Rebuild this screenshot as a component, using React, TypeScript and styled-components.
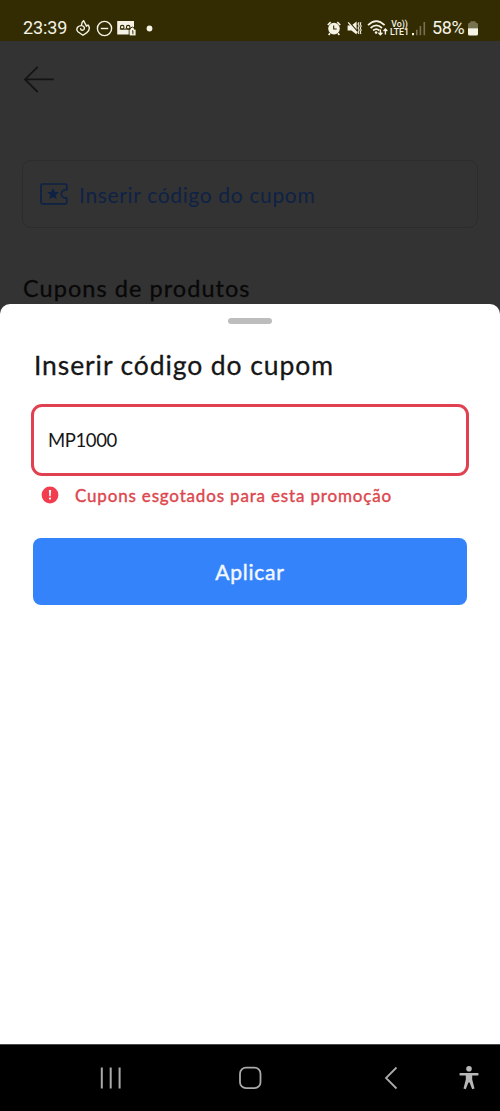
import React from "react";
import styled, { createGlobalStyle } from "styled-components";

const GlobalStyle = createGlobalStyle`
  * { box-sizing: border-box; }
  body { margin: 0; background: #333; }
`;

const Screen = styled.main`
  width: 500px;
  height: 1111px;
  display: flex;
  flex-direction: column;
  overflow: hidden;
  background: #333;
  font-family: Lato, "Liberation Sans", sans-serif;
`;

const StatusBar = styled.header`
  height: 41px;
  flex: none;
  padding: 15px 22px 0 23px;
  display: flex;
  justify-content: space-between;
  background: #332c02;
  color: #f5f3e6;
`;

const StatusGroup = styled.div`
  height: 26px;
  display: flex;
  align-items: center;
`;

const StatusText = styled.span<{ $width: number; $spacing: number; $left?: number }>`
  width: ${(p) => p.$width}px;
  margin-left: ${(p) => p.$left ?? 0}px;
  font: 400 18px/26px Roboto, sans-serif;
  letter-spacing: ${(p) => p.$spacing}px;
  white-space: nowrap;
`;

const StatusGlyph = styled.svg<{ $left: number }>`
  display: block;
  flex: none;
  margin-left: ${(p) => p.$left}px;
`;

const NetworkLabel = styled.span`
  width: 19px;
  margin-left: 2px;
  display: flex;
  flex-direction: column;
  align-items: center;
  font: 500 8.8px/8px Roboto, sans-serif;
  white-space: nowrap;
`;

const Page = styled.section`
  height: 263px;
  flex: none;
  display: flex;
  flex-direction: column;
  padding: 23px 22px 0;
`;

const BackIcon = styled.svg`
  display: block;
  flex: none;
  margin-left: 1px;
`;

const CouponField = styled.div`
  height: 68px;
  flex: none;
  margin-top: 66px;
  padding-left: 17px;
  display: flex;
  align-items: center;
  border: 1px solid #2c2c2c;
  border-radius: 9px;
`;

const Label = styled.span<{
  $size: number;
  $color: string;
  $spacing?: number;
  $stroke?: number;
}>`
  display: block;
  font-size: ${(p) => p.$size}px;
  font-weight: 400;
  color: ${(p) => p.$color};
  letter-spacing: ${(p) => p.$spacing ?? 0}px;
  -webkit-text-stroke: ${(p) => p.$stroke ?? 0}px ${(p) => p.$color};
  white-space: nowrap;
`;

const FieldLabel = styled(Label)`
  margin-left: 11px;
`;

const SectionTitle = styled(Label)`
  line-height: 30px;
  margin: 45px 0 0 1px;
`;

const Sheet = styled.section`
  flex: 1;
  display: flex;
  flex-direction: column;
  padding: 14px 31px 0;
  background: #fff;
  border-radius: 10px 10px 0 0;
`;

const Handle = styled.div`
  width: 44px;
  height: 6px;
  flex: none;
  align-self: center;
  border-radius: 3px;
  background: #bdbdbd;
`;

const SheetTitle = styled(Label)`
  margin: 24px 0 0 3px;
  line-height: 34px;
`;

const CodeInput = styled.div`
  height: 72px;
  flex: none;
  margin-top: 22px;
  padding-left: 14px;
  display: flex;
  align-items: center;
  border: 3px solid #e0404f;
  border-radius: 11px;
`;

const ErrorRow = styled.div`
  height: 24px;
  margin: 7px 0 0 10px;
  display: flex;
  align-items: center;
  gap: 16px;
`;

const ApplyButton = styled.button`
  width: 434px;
  height: 67px;
  margin: 31px 0 0 2px;
  padding: 0;
  display: flex;
  align-items: center;
  justify-content: center;
  border: 0;
  border-radius: 8px;
  background: #3483fa;
  font-family: inherit;
`;

const NavBar = styled.nav`
  height: 67px;
  flex: none;
  display: flex;
  align-items: center;
  padding: 0 20px 1px 99px;
  border-top: 1px solid #4a4a4a;
  background: #000;
`;

const NavIcon = styled.svg<{ $left: number }>`
  display: block;
  flex: none;
  margin-left: ${(p) => p.$left}px;
`;

export default function App() {
  return (
    <>
      <GlobalStyle />
      <Screen>
        <StatusBar>
          <StatusGroup>
            <StatusText $width={52} $spacing={-0.1}>23:39</StatusText>
            <StatusGlyph $left={0} width="16" height="18" viewBox="0 0 16 18" fill="none" stroke="currentColor" strokeWidth="1.4" strokeLinecap="round" strokeLinejoin="round">
              <path d="M5.6 9.6C5.8 11.4 8 11.8 9 10.4C10 8.8 8.8 6.6 6.4 6.6C3.4 6.6 1.3 8.8 2 11.4C2.4 12.8 3.6 13.6 5 14.2L8 16.3L11.8 13.6C14.8 11 15 8.4 13 6L11.4 7.2C10.6 4.8 9.6 4.2 8.6 1.6C6.6 2.8 6.6 4.6 6.4 6.6" />
            </StatusGlyph>
            <StatusGlyph $left={5} width="17" height="17" viewBox="0 0 17 17" fill="none" stroke="currentColor" strokeWidth="1.4">
              <circle cx="8.5" cy="8.5" r="7.1" />
              <path d="M4.8 8.5H12.2" />
            </StatusGlyph>
            <StatusGlyph $left={4} width="19" height="16" viewBox="0 0 19 16" fill="none">
              <path d="M.2 1H17V14.5H.2Z" fill="currentColor" />
              <circle cx="5.2" cy="7.2" r="1.8" stroke="#332c02" strokeWidth="1.1" />
              <circle cx="11.2" cy="7.2" r="1.8" stroke="#332c02" strokeWidth="1.1" />
              <path d="M2.8 9.1H13.5" stroke="#332c02" strokeWidth="1.1" />
              <path d="M12.2 15.5V9.2H13.3V8.2Q15.4 5.8 17.4 8.2V9.2H19" stroke="#332c02" strokeWidth="1" />
              <path d="M12.8 9.6H18.6V15.4H12.8Z" fill="currentColor" />
              <path d="M15.1 11.1L15.9 10.7V14.2" stroke="#332c02" strokeWidth="1" />
            </StatusGlyph>
            <StatusGlyph $left={10} width="7" height="7" viewBox="0 0 7 7">
              <circle cx="3.5" cy="3.5" r="2.9" fill="currentColor" />
            </StatusGlyph>
          </StatusGroup>
          <StatusGroup>
            <StatusGlyph $left={0} width="14" height="15" viewBox="0 0 14 15" fill="none" stroke="currentColor">
              <circle cx="7" cy="7.6" r="5.8" fill="currentColor" stroke="none" />
              <path d="M.8 4L3.7 1.2M13.2 4L10.3 1.2M3 12.2L1.7 14M11 12.2L12.3 14" strokeWidth="1.7" />
              <path d="M6.7 4.4V8H9.7" stroke="#332c02" strokeWidth="1.1" />
            </StatusGlyph>
            <StatusGlyph $left={6} width="15" height="16" viewBox="0 0 15 16" fill="none" stroke="currentColor">
              <path d="M.6 5.4H4.4L9.6 1.6V14.4L4.4 10.6H.6Z" fill="currentColor" stroke="none" />
              <path d="M2.2 2L10.4 11.4" stroke="#332c02" strokeWidth="1.3" />
              <path d="M1.2 2.4L10.2 13" strokeWidth="1.3" />
              <path d="M12 2.2L11 4L12.2 6L11 8L12.2 10L11 12L12 14M14 2.2L13.2 4L14.2 6L13.2 8L14.2 10L13.2 12L14 14" strokeWidth="1.05" />
            </StatusGlyph>
            <StatusGlyph $left={5} width="21" height="18" viewBox="0 0 21 18" fill="none" stroke="currentColor" strokeWidth="1.7">
              <path d="M1 6.2Q9.3 -1.8 17.6 6.2M3.6 9Q9.3 3.8 15 9M6.1 11.5Q9.3 8.8 12.4 11.5" />
              <circle cx="9.1" cy="13.6" r="1.3" fill="currentColor" stroke="none" />
              <path d="M13.4 10.5V15.5M11.4 13.8L13.4 15.8L15.4 13.8M18.4 15.6V10.2M16.5 11.9L18.4 10L20.3 11.9" strokeWidth="1.4" />
            </StatusGlyph>
            <NetworkLabel>
              <span>Vo))</span>
              <span>LTE1</span>
            </NetworkLabel>
            <StatusGlyph $left={3} width="14" height="15" viewBox="0 0 14 15" fill="currentColor">
              <path d="M0 12H2V14.2H0Z" />
              <path d="M4 8.8H5.6V14.2H4ZM7.6 5H9.2V14.2H7.6ZM11.5 1H13.1V14.2H11.5Z" opacity=".35" />
            </StatusGlyph>
            <StatusText $width={36} $spacing={-0.4} $left={6}>58%</StatusText>
            <StatusGlyph $left={0} width="10" height="15" viewBox="0 0 10 15">
              <path d="M2.3 1Q2.3 .3 3 .3H7Q7.7 .3 7.7 1V1.8H8.5Q10 1.8 10 3.3V7.3H0V3.3Q0 1.8 1.5 1.8H2.3Z" fill="#77724f" />
              <path d="M0 7.3H10V13Q10 14.5 8.5 14.5H1.5Q0 14.5 0 13Z" fill="currentColor" />
            </StatusGlyph>
          </StatusGroup>
        </StatusBar>

        <Page>
          <BackIcon width="32" height="30" viewBox="0 0 32 30" fill="none" stroke="#141414" strokeWidth="1.8">
            <path d="M14.7 2.8L2 15.4L14.7 28M2 15.4H30.7" />
          </BackIcon>
          <CouponField>
            <svg width="28" height="22" viewBox="0 0 28 22" fill="none" stroke="#0e2246" strokeWidth="1.7" strokeLinejoin="round">
              <path d="M2.5 1H25.2Q26.8 1 26.8 2.6V6.6C23.7 6.6 21.3 8.3 21.3 11C21.3 13.5 23.7 15.1 26.8 15.1V19.3Q26.8 20.9 25.2 20.9H2.5Q1 20.9 1 19.3V2.6Q1 1 2.5 1Z" />
              <path d="M13 5L14.7 8.8L18.8 9.2L15.7 11.9L16.7 16.3L13 14L9.3 16.3L10.3 11.9L7.2 9.2L11.3 8.8Z" fill="#0e2246" stroke="none" />
            </svg>
            <FieldLabel $size={21} $color="#0e2246" $spacing={0.66}>Inserir código do cupom</FieldLabel>
          </CouponField>
          <SectionTitle $size={23.5} $color="#080808" $spacing={1.05} $stroke={0.3}>Cupons de produtos</SectionTitle>
        </Page>

        <Sheet>
          <Handle />
          <SheetTitle $size={26.5} $color="#161616" $spacing={0.9} $stroke={0.3}>Inserir código do cupom</SheetTitle>
          <CodeInput>
            <Label $size={18.5} $color="#161616" $spacing={-0.4}>MP1000</Label>
          </CodeInput>
          <ErrorRow>
            <svg width="18" height="18" viewBox="0 0 18 18">
              <circle cx="9" cy="9" r="8.4" fill="#f23d4f" />
              <path d="M7.9 4H10.1L9.7 10.2H8.3Z" fill="#fff" />
              <circle cx="9" cy="12.6" r="1.15" fill="#fff" />
            </svg>
            <Label $size={17} $color="#dc474e" $spacing={0.83} $stroke={0.4}>Cupons esgotados para esta promoção</Label>
          </ErrorRow>
          <ApplyButton>
            <Label $size={21} $color="#f4f8ff" $spacing={0.75} $stroke={0.45}>Aplicar</Label>
          </ApplyButton>
        </Sheet>

        <NavBar>
          <NavIcon $left={0} width="24" height="24" viewBox="0 0 24 24" stroke="#aaa" strokeWidth="2">
            <path d="M2.8 1.5V22.5M11.7 1.5V22.5M20.6 1.5V22.5" />
          </NavIcon>
          <NavIcon $left={115} width="24" height="24" viewBox="0 0 24 24" fill="none" stroke="#aaa" strokeWidth="1.8">
            <rect x="2" y="1.7" width="20.5" height="20.5" rx="6" />
          </NavIcon>
          <NavIcon $left={122} width="16" height="24" viewBox="0 0 16 24" fill="none" stroke="#aaa" strokeWidth="1.8">
            <path d="M12.5 1.5L2 12L12.5 22.5" />
          </NavIcon>
          <NavIcon $left={58} width="22" height="26" viewBox="0 0 22 26" fill="#b8b8b8">
            <circle cx="11" cy="3.8" r="2.8" />
            <path d="M2.5 8H19.5Q20.6 8 20.6 9.3Q20.6 10.5 19.5 10.5H14.2V14.5L16.5 23.5L14.2 24.2L11.6 17.5H10.4L7.8 24.2L5.5 23.5L7.8 14.5V10.5H2.5Q1.4 10.5 1.4 9.3Q1.4 8 2.5 8Z" />
          </NavIcon>
        </NavBar>
      </Screen>
    </>
  );
}
